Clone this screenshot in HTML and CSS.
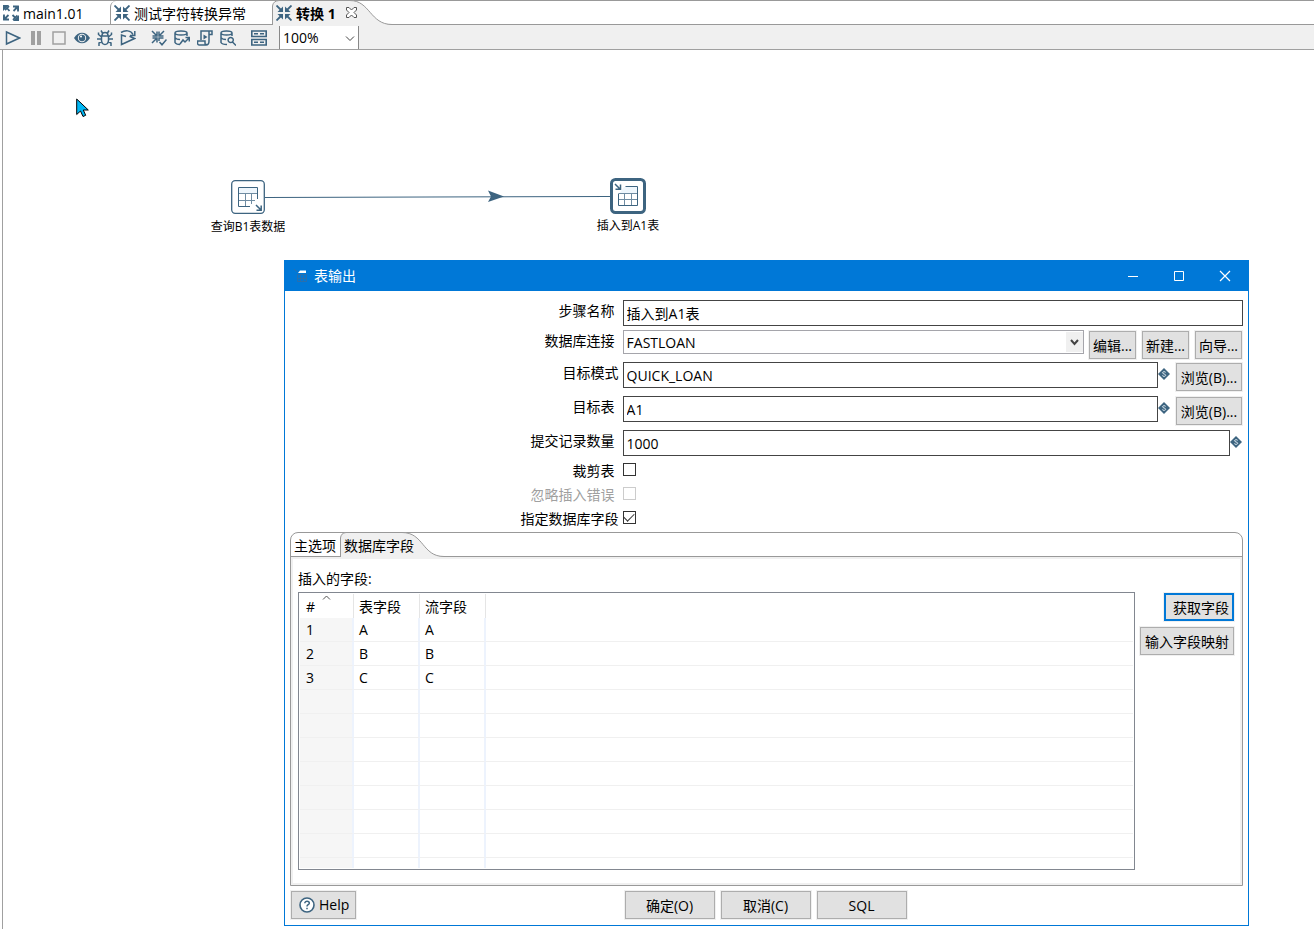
FILE: index.html
```html
<!DOCTYPE html>
<html lang="zh-CN">
<head>
<meta charset="utf-8">
<title>转换 1</title>
<link rel="stylesheet" href="styles.css">
</head>
<body>
<svg class="defs" width="0" height="0" aria-hidden="true">
  <symbol id="arrows-in" viewBox="0 0 16 16">
    <g fill="none" stroke="#3d6480" stroke-width="1.800"><path d="M0.500 0.500L5 5M15.500 0.500L11 5M0.500 15.500L5 11M15.500 15.500L11 11"/></g>
    <path fill="#3d6480" d="M7 1.500V7H1.500L3.500 5L5 3.500zM9 1.500V7h5.500L12.500 5L11 3.500zM7 14.500V9H1.500L3.500 11L5 12.500zM9 14.500V9h5.500L12.500 11L11 12.500z"/>
  </symbol>
  <symbol id="arrows-out" viewBox="0 0 16 16">
    <path fill="none" stroke="#3d6480" stroke-width="1.800" d="M2 5L6 1M4 3L6.500 6M10 1.500H15V6.500M15 1.500L10.500 6M1 9.500V14.500H6M1 14.500L5.500 10M10 15L14.500 10.500M9.500 10L12.500 13"/>
    <path fill="#3d6480" d="M0 0H6L0 6zM16 1V6L11 1zM0 15V10L5 15zM16 16H10L16 10z"/>
  </symbol>
  <symbol id="diamond" viewBox="0 0 12 12">
    <path fill="#3d6480" d="M6 0L12 6L6 12L0 6z"/>
    <path fill="none" stroke="#d8e4ec" stroke-width="1" d="M7.700 4.400C7.300 3.400 4.500 3.400 4.500 4.800C4.500 6.200 7.700 5.700 7.700 7.300C7.700 8.700 4.700 8.700 4.300 7.500"/>
  </symbol>
</svg>

<div class="app">
  <div class="editor-tabs" role="tablist">
    <button class="editor-tab tab-main" role="tab"><svg class="icon"><use href="#arrows-out"/></svg><span>main1.01</span></button>
    <button class="editor-tab tab-test" role="tab"><svg class="icon"><use href="#arrows-in"/></svg><span>测试字符转换异常</span></button>
    <div class="editor-tab tab-current">
      <svg class="tab-shape" viewBox="0 0 120 25"><path fill="#f0f0f0" stroke="#999" d="M.5 26V6Q1 1 7 .5H78C98 .5 98 24.500 120 24.500V26z"/></svg>
      <button class="tab-label" role="tab" aria-selected="true"><svg class="icon"><use href="#arrows-in"/></svg><span>转换 1</span></button>
      <button class="tab-close" aria-label="关闭"><svg width="11" height="11" viewBox="0 0 11 11"><path fill="#fff" stroke="#555" d="M.5 .5H3L5.500 3L8 .5H10.500V3L8 5.500L10.500 8V10.500H8L5.500 8L3 10.500H.5V8L3 5.500L.5 3z"/></svg></button>
    </div>
  </div>

  <div class="toolbar">
    <button aria-label="运行"><svg class="icon" viewBox="0 0 16 16"><path class="ln" stroke-width="1.800" d="M1.500 2L14.500 8L1.500 14z"/></svg></button>
    <button aria-label="暂停"><svg class="icon" viewBox="0 0 16 16"><path fill="#a0a0a0" d="M3 1h4v14H3zM9 1h4v14H9z"/></svg></button>
    <button aria-label="停止"><svg class="icon" viewBox="0 0 16 16"><path fill="none" stroke="#a0a0a0" stroke-width="1.500" d="M2 2h12v12H2z"/></svg></button>
    <button aria-label="预览"><svg class="icon" viewBox="0 0 16 16"><path fill="#3d6480" d="M0 8C4 1 12 1 16 8C12 15 4 15 0 8z"/><circle cx="8" cy="8" r="4.200" fill="#f0f0f0"/><circle cx="8" cy="8" r="3.200" fill="#3d6480"/><circle cx="7" cy="6.500" r="1" fill="#fff"/></svg></button>
    <button aria-label="调试"><svg class="icon" viewBox="0 0 16 16"><path class="ln" d="M4.500 6H11.500V10.500Q11 14.500 8 14.500Q5 14.500 4.500 10.500zM5 5.500Q5 2.500 8 2.500Q11 2.500 11 5.500M5.500 3L4 .5M10.500 3L12 .5M4.500 7L1.500 4.500V2.500M11.500 7L14.500 4.500V2.500M4.500 9H0M11.500 9H16M4.800 11.500L2 13V16M11.200 11.500L14 13V16"/></svg></button>
    <button aria-label="重放"><svg class="icon" viewBox="0 0 16 16"><path class="ln" d="M1.500 5V14.500L14.500 8.500L9.500 6.200M1.500 8V5L6 6.500M1 2.500C5 0 11 0 13 4.500M14.800 1V5.500H10"/></svg></button>
    <button class="group" aria-label="校验"><svg class="icon" viewBox="0 0 16 16"><path class="ln" d="M1 1L5 5M13 1L9 5M1 13L5 9M6 1.500V6H1.500M8 1.500V6H12.500M6 12.500V8H1.500M8 11V8H12.500M8.500 12L11 14.800L15.500 9.500"/></svg></button>
    <button aria-label="影响分析"><svg class="icon" viewBox="0 0 16 16"><path class="ln" d="M1 3C1 .3 13 .3 13 3S1 5.700 1 3zM1 3V12.500Q2 14.500 6 14.500M13 3V6M1 7.500Q2 9.500 6 9.500M6 14L9 10L11 12L15 8M11.500 7.500H15.300V11.500"/></svg></button>
    <button aria-label="SQL"><svg class="icon" viewBox="0 0 16 16"><path class="ln" d="M4 10V1H15V4.500H12V11Q12 15 9 15H2Q0 15 .7 11H8V13Q8 15 10 14.500M12 1V5"/><path fill="#3d6480" d="M6.500 4.500L10.500 7L6.500 9.500z"/></svg></button>
    <button aria-label="浏览数据库"><svg class="icon" viewBox="0 0 16 16"><path class="ln" d="M1 3C1 .3 12 .3 12 3S1 5.700 1 3zM1 3V12.500Q2 14.500 7 14.500M12 3V6M1 7.500Q2 9.500 6 9.500M13.300 10A2.600 2.600 0 1 1 8.100 10A2.600 2.600 0 1 1 13.300 10M12.500 12L16 15.500"/></svg></button>
    <button class="group" aria-label="显示结果"><svg class="icon" viewBox="0 0 16 16"><path fill="none" stroke="#3d6480" stroke-width="1.600" d="M.8 1H15.200V6.500H.8zM.8 9.500H15.200V15H.8zM3 3.700H7M9 3.700H13M3 12.200H7M9 12.200H13"/></svg></button>
    <div class="zoom">
      <select aria-label="缩放"><option>100%</option></select>
      <svg class="zoom-arrow" width="10" height="6" viewBox="0 0 10 6"><path fill="none" stroke="#444" d="M1 .5L5 4.500L9 .5"/></svg>
    </div>
  </div>

  <main class="canvas">
    <svg class="hop" width="346" height="14" viewBox="0 0 346 14"><path stroke="#3d6480" stroke-width="1.100" d="M0 7.500L345 6.500"/><path fill="#3d6480" d="M223 .5L239 6.500L223 12L226 6.500z"/></svg>
    <div class="node node-input">
      <svg width="34" height="34" viewBox="0 0 34 34"><rect x=".7" y=".7" width="32.600" height="32.600" rx="3.500" fill="#fff" stroke="#3d6480" stroke-width="1.300"/><path fill="#eef6fc" d="M8 8h18v5H8z"/><path fill="none" stroke="#6f8ca2" d="M8 13.500H26M8 20.500H24M14.500 14V26M20.500 14V24"/><path fill="none" stroke="#3d6480" d="M26.500 19V7.500H7.500V26.500H19"/><path fill="none" stroke="#3d6480" stroke-width="1.500" d="M25 25L30 30M30.200 25.500V30.200H25.500"/></svg>
      <span>查询B1表数据</span>
    </div>
    <div class="node node-output">
      <svg width="36" height="36" viewBox="0 0 36 36"><rect x="1.500" y="1.500" width="33" height="33" rx="4" fill="#fff" stroke="#3d6480" stroke-width="3"/><path fill="#eef6fc" d="M14 9h14v7H9z"/><path fill="none" stroke="#6f8ca2" d="M9 15.500H27M9 21.500H27M14.500 16V27M21.500 16V27"/><path fill="none" stroke="#3d6480" d="M15.500 8.500H27.500V27.500H8.500V15.500"/><path fill="none" stroke="#3d6480" stroke-width="1.500" d="M5 6L10 11M10.500 6.500V11.200H5.500"/></svg>
      <span>插入到A1表</span>
    </div>
    <svg class="pointer" width="14" height="20" viewBox="0 0 14 20"><path fill="#00b7f5" stroke="#000" d="M.7 1V16.500L4.500 13L7 18.500L9.700 17.300L7.300 12H12.300z"/></svg>

    <section class="dialog" role="dialog" aria-labelledby="dlg-title">
      <header class="titlebar">
        <svg width="16" height="16" viewBox="0 0 16 16"><path fill="none" stroke="#2a6fac" d="M4.500 6.500H13.500V13.500H4.500zM7.500 6V13M10.500 6V13M4 10.500H13M1 1L4 4"/><path fill="#fff" d="M7 2.500H13V5H5z"/></svg>
        <h1 id="dlg-title">表输出</h1>
        <button aria-label="最小化"><svg width="12" height="12" viewBox="0 0 12 12"><path stroke="#fff" d="M1 6.500H11"/></svg></button>
        <button aria-label="最大化"><svg width="12" height="12" viewBox="0 0 12 12"><path fill="none" stroke="#fff" d="M1.500 1.500H10.500V10.500H1.500z"/></svg></button>
        <button aria-label="关闭"><svg width="12" height="12" viewBox="0 0 12 12"><path stroke="#fff" stroke-width="1.200" d="M1 1L11 11M11 1L1 11"/></svg></button>
      </header>

      <div class="content">
        <form class="form">
          <div class="row r-name"><label for="step">步骤名称</label><div class="ctl"><input id="step" type="text" value="插入到A1表"></div></div>
          <div class="row r-conn"><label for="conn">数据库连接</label><div class="ctl with-extra">
            <div class="combo"><select id="conn"><option>FASTLOAN</option></select><span class="combo-arrow"><svg width="9" height="7" viewBox="0 0 9 7"><path fill="none" stroke="#444" stroke-width="2" d="M1 1L4.500 5L8 1"/></svg></span></div>
            <div class="conn-actions"><button type="button" class="btn small">编辑...</button><button type="button" class="btn small">新建...</button><button type="button" class="btn small">向导...</button></div>
          </div></div>
          <div class="row"><label class="wide" for="schema">目标模式</label><div class="ctl with-extra"><input id="schema" type="text" value="QUICK_LOAN"><svg class="var"><use href="#diamond"/></svg><button type="button" class="btn browse">浏览(B)...</button></div></div>
          <div class="row"><label for="table">目标表</label><div class="ctl with-extra"><input id="table" type="text" value="A1"><svg class="var"><use href="#diamond"/></svg><button type="button" class="btn browse">浏览(B)...</button></div></div>
          <div class="row r-commit"><label for="commit">提交记录数量</label><div class="ctl with-extra"><input id="commit" type="text" value="1000"><svg class="var"><use href="#diamond"/></svg></div></div>
          <div class="row check"><label for="trunc">裁剪表</label><input id="trunc" type="checkbox"></div>
          <div class="row check off"><label for="ignore">忽略插入错误</label><input id="ignore" type="checkbox" disabled></div>
          <div class="row check"><label class="wide" for="spec">指定数据库字段</label><input id="spec" type="checkbox" checked></div>
        </form>

        <div class="folder">
          <div class="folder-tabs" role="tablist">
            <button class="ftab" role="tab">主选项</button>
            <button class="ftab current" role="tab" aria-selected="true"><svg class="ftab-shape" viewBox="0 0 105 25"><path fill="#f0f0f0" stroke="#999" d="M.5 26V6Q1 1 6 .5H62C84 .5 82 24.500 104 24.500V26z"/></svg><span>数据库字段</span></button>
          </div>
          <div class="folder-body">
            <p>插入的字段:</p>
            <div class="fields">
              <div class="grid">
                <table>
                  <colgroup><col class="c-num"><col class="c-field"><col class="c-field"><col></colgroup>
                  <thead><tr><th>#<svg class="sort" width="9" height="5" viewBox="0 0 9 5"><path fill="none" stroke="#555" d="M1 4.500L4.500 1L8 4.500"/></svg></th><th>表字段</th><th>流字段</th><th></th></tr></thead>
                  <tbody>
                    <tr><td>1</td><td>A</td><td>A</td><td></td></tr>
                    <tr><td>2</td><td>B</td><td>B</td><td></td></tr>
                    <tr><td>3</td><td>C</td><td>C</td><td></td></tr>
                    <tr><td></td><td></td><td></td><td></td></tr>
                    <tr><td></td><td></td><td></td><td></td></tr>
                    <tr><td></td><td></td><td></td><td></td></tr>
                    <tr><td></td><td></td><td></td><td></td></tr>
                    <tr><td></td><td></td><td></td><td></td></tr>
                    <tr><td></td><td></td><td></td><td></td></tr>
                    <tr><td></td><td></td><td></td><td></td></tr>
                    <tr class="tail"><td></td><td></td><td></td><td></td></tr>
                  </tbody>
                </table>
              </div>
              <div class="side">
                <button class="btn focus">获取字段</button>
                <button class="btn">输入字段映射</button>
              </div>
            </div>
          </div>
        </div>

        <footer class="footer">
          <div class="footer-left"><button class="btn help"><svg width="16" height="16" viewBox="0 0 16 16"><circle cx="8" cy="8" r="7" fill="#fff" stroke="#3d6480" stroke-width="1.600"/><path fill="none" stroke="#3d6480" stroke-width="1.500" d="M5.800 6.300C5.800 3.500 10.300 3.700 10.300 6.200C10.300 7.800 8 7.700 8 9.500M8 10.800V12.200"/></svg>Help</button></div>
          <button class="btn">确定(O)</button>
          <button class="btn">取消(C)</button>
          <button class="btn">SQL</button>
        </footer>
      </div>
    </section>
  </main>
</div>
</body>
</html>
```
FILE: styles.css
```css
* { box-sizing: border-box; }

body {
  margin: 0;
  font: 14px/20px "Open Sans", "Noto Sans CJK SC", sans-serif;
  color: #000;
  background: #fff;
}

button, input, select { font: inherit; color: inherit; }
button { padding: 0; border: 0; background: none; white-space: nowrap; }
svg { display: block; flex: none; }
.defs { position: absolute; }
.icon { width: 16px; height: 16px; }
.ln { fill: none; stroke: #3d6480; stroke-width: 1.5; }

.app { display: flex; flex-direction: column; height: 100vh; overflow: hidden; }

/* Editor tabs */
.editor-tabs {
  display: flex;
  height: 25px;
  border-top: 1px solid #999;
  border-bottom: 1px solid #999;
}
.editor-tab { display: flex; align-items: center; gap: 4px; }
.editor-tab span { padding-top: 2px; }
.tab-main { width: 110px; padding-left: 3px; border-top-left-radius: 6px; }
.tab-test { width: 162px; padding-left: 3px; border-left: 1px solid #999; border-top-left-radius: 6px; }
.tab-current { position: relative; width: 120px; height: 25px; margin-top: -1px; padding-left: 4px; gap: 10px; font-weight: bold; }
.tab-shape { position: absolute; left: 0; top: 0; width: 120px; height: 25px; }
.tab-label, .tab-close { position: relative; }
.tab-label { display: flex; align-items: center; gap: 4px; }

/* Toolbar */
.toolbar {
  display: flex;
  align-items: center;
  height: 25px;
  padding: 1px 0 0 1px;
  background: #f0f0f0;
  border-bottom: 1px solid #a0a0a0;
}
.toolbar button { display: flex; justify-content: center; width: 23px; }
.toolbar .group { margin-left: 8px; }
.zoom { position: relative; margin-left: 9px; height: 23px; }
.zoom select {
  appearance: none;
  display: block;
  width: 80px;
  height: 23px;
  padding: 0 3px;
  border: 1px solid #888;
  border-width: 0 1px;
  border-radius: 0;
  background: #fff;
}
.zoom-arrow { position: absolute; right: 4px; top: 10px; pointer-events: none; }

/* Canvas */
.canvas { position: relative; flex: 1; margin-left: 2px; border-left: 1px solid #a0a0a0; }
.hop { position: absolute; left: 262px; top: 140px; }
.node { position: absolute; display: flex; flex-direction: column; align-items: center; width: 100px; font-size: 12px; line-height: 18px; gap: 4px; }
.node span { white-space: nowrap; }
.node-input { left: 195px; top: 130px; }
.node-output { left: 575px; top: 128px; gap: 3px; }
.pointer { position: absolute; left: 73px; top: 48px; }

/* Dialog */
.dialog {
  position: absolute;
  left: 281px;
  right: 65px;
  top: 210px;
  border: 1px solid #0078d7;
  background: #fff;
}
.titlebar { display: flex; align-items: center; height: 30px; padding: 0 0 1px 8px; background: #0078d7; color: #fff; }
.titlebar h1 { flex: 1; margin: 0 0 0 5px; font-size: 14px; font-weight: normal; }
.titlebar button { display: flex; justify-content: center; width: 46px; }
.content { padding: 9px 5px 6px; }

.row { display: grid; grid-template-columns: 34.9% 1fr; height: 34px; }
.r-name { height: 30px; }
.r-conn { height: 32px; }
.r-commit { height: 28px; }
.row label { padding-right: 8px; text-align: right; line-height: 22px; }
.row label.wide { padding-right: 4px; }
.ctl { display: flex; align-items: flex-start; }
.with-extra { padding-right: 1px; }
.ctl input {
  flex: 1;
  min-width: 0;
  height: 26px;
  padding: 0 3px;
  border: 1px solid #444;
}
.combo { position: relative; flex: 1; }
.combo select {
  appearance: none;
  display: block;
  width: 100%;
  height: 24px;
  padding: 1px 3px 0;
  border: 1px solid #a5a5ab;
  border-radius: 0;
  background: #fff;
}
.combo-arrow {
  position: absolute;
  right: 1px;
  top: 2px;
  display: grid;
  place-items: center;
  width: 17px;
  height: 20px;
  background: #f0f0f0;
  pointer-events: none;
}
.conn-actions { display: flex; gap: 6px; margin: 1px 0 0 5px; }
.var { width: 12px; height: 12px; margin-top: 6px; }

.btn {
  height: 28px;
  padding: 2px 4px 0;
  border: 1px solid #adadad;
  background: #e1e1e1;
  box-shadow: 0 0 0 1px #f0f0f0;
}
.small { width: 47px; padding: 2px 0 0; }
.browse { width: 66px; margin: 1px 0 0 6px; padding: 2px 0 0; }
.focus { border: 2px solid #0078d7; padding: 1px 3px 0 7px; }

.check { height: 24px; }
.check label { line-height: 26px; }
.check input {
  appearance: none;
  display: grid;
  place-items: center;
  width: 13px;
  height: 13px;
  margin: 5px 0 0;
  border: 1px solid #333;
  background: #fff;
}
.check input:checked::after {
  content: "";
  width: 9px;
  height: 5px;
  margin-bottom: 3px;
  border: solid #333;
  border-width: 0 0 1px 1px;
  transform: rotate(-45deg);
}
.off label { color: #a0a0a0; }
.off input { border-color: #ccc; }

/* Tab folder */
.folder { margin-top: 2px; border: 1px solid #999; border-radius: 8px 8px 0 0; }
.folder-tabs { display: flex; height: 24px; border-bottom: 1px solid #999; }
.ftab { width: 49px; padding: 3px 0 0 3px; text-align: left; }
.ftab.current { position: relative; width: 104px; height: 25px; margin-top: -1px; padding: 3px 0 0 4px; }
.ftab-shape { position: absolute; left: 0; top: 0; width: 105px; height: 25px; }
.ftab span { position: relative; }
.folder-body { padding: 9px 6px 13px 5px; border: 2px solid #f0f0f0; }
.folder-body p { margin: 0 0 2px; line-height: 22px; }
.fields { display: flex; align-items: flex-start; gap: 5px; }

.grid { flex: 1; min-width: 0; padding: 1px; border: 1px solid #828790; }
table { width: 100%; table-layout: fixed; border-collapse: separate; border-spacing: 0; }
.c-num { width: 54px; }
.c-field { width: 66px; }
th, td { height: 24px; padding: 0 0 0 5px; text-align: left; font-weight: normal; line-height: 20px; }
th { position: relative; border-right: 1px solid #e5e5e5; padding-top: 2px; }
td { border-right: 2px solid #edf3fd; border-bottom: 1px solid #f0f0f0; }
td:first-child { background: #f6f6f6; }
th:last-child, td:last-child { border-right: 0; }
th:first-child, td:first-child { padding-left: 6px; }
.tail td { height: 10px; border-bottom: 0; }
.sort { position: absolute; left: 22px; top: 1px; }
.side { display: flex; flex-direction: column; align-items: flex-end; gap: 6px; padding-top: 1px; }

.footer { display: grid; grid-template-columns: 1fr 90px 90px 90px 1fr; gap: 6px; margin-top: 5px; padding-right: 2px; }
.footer-left { padding-left: 1px; }
.help { display: flex; align-items: center; gap: 4px; padding: 0 6px 0 7px; }
```
